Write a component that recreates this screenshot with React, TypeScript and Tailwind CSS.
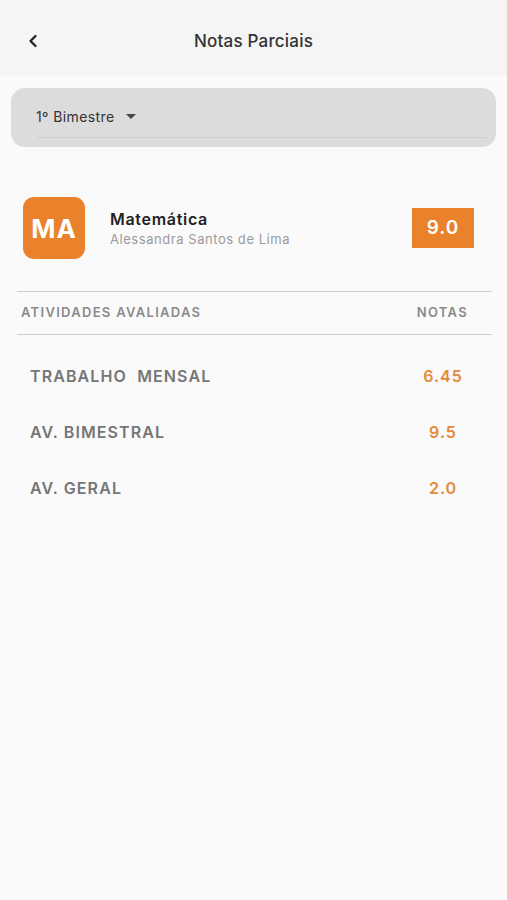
import { ChevronLeft } from "lucide-react";

interface ActivityRowProps {
  name: string;
  grade: string;
}

function ActivityRow({ name, grade }: ActivityRowProps) {
  return (
    <div className="flex h-[56px] items-center justify-between pl-[30px] pr-[44px]">
      <span className="whitespace-pre text-[16px] font-semibold tracking-[1.1px] text-[#767676]">{name}</span>
      <span className="w-[40px] text-center text-[16px] font-semibold tracking-[1px] text-[#e38a3c]">{grade}</span>
    </div>
  );
}

export default function App() {
  return (
    <div className="min-h-[900px] bg-[#fafafa] font-['Inter','Liberation_Sans',sans-serif]">
      {/* cabeçalho */}
      <div className="relative flex h-[76px] items-center justify-center bg-[#f5f5f5] pt-[7px]">
        <ChevronLeft size={20} strokeWidth={2.8} className="absolute left-[23px] top-[31px] text-[#222]" />
        <span className="text-[17px] font-medium tracking-[0.2px] text-[#333]">Notas Parciais</span>
      </div>

      <div className="px-[11px] pt-[12px]">
        <div className="flex h-[59px] flex-col justify-center rounded-[14px] bg-[#dcdcdc] px-[25px] pt-[8px]">
          <div className="flex items-center gap-[12px]">
            <span className="text-[14px] tracking-[0.4px] text-[#333]">1º Bimestre</span>
            <span className="mt-[1px] h-0 w-0 border-x-[5px] border-t-[5px] border-x-transparent border-t-[#444]" />
          </div>
          <div className="mt-[10px] ml-[1px] mr-[-15px] h-px bg-[#cfcfcf]" />
        </div>
      </div>

      {/* disciplina */}
      <div className="flex items-center px-[23px] pt-[50px]">
        <div className="flex h-[62px] w-[62px] items-center justify-center rounded-[11px] bg-[#e9822a]">
          <span className="text-[26px] font-bold tracking-[1px] text-white">MA</span>
        </div>
        <div className="ml-[25px] flex flex-1 flex-col">
          <span className="text-[16px] font-semibold leading-[22px] tracking-[0.7px] text-[#222]">Matemática</span>
          <span className="text-[13px] leading-[18px] tracking-[0.55px] text-[#9a9a9a]">Alessandra Santos de Lima</span>
        </div>
        <div className="mr-[10px] flex h-[40px] w-[62px] items-center justify-center bg-[#e9822a]">
          <span className="text-[19px] font-semibold tracking-[1px] text-white">9.0</span>
        </div>
      </div>

      <div className="ml-[17px] mr-[15px] mt-[32px] h-px bg-[#cdcdcd]" />
      <div className="flex h-[42px] items-center justify-between pl-[21px] pr-[39px]">
        <span className="text-[13px] font-semibold tracking-[1.3px] text-[#8a8a8a]">ATIVIDADES AVALIADAS</span>
        <span className="text-[13px] font-semibold tracking-[1.3px] text-[#8a8a8a]">NOTAS</span>
      </div>
      <div className="ml-[17px] mr-[15px] h-px bg-[#cdcdcd]" />

      <div className="pt-[13px]">
        <ActivityRow name="TRABALHO  MENSAL" grade="6.45" />
        <ActivityRow name="AV. BIMESTRAL" grade="9.5" />
        <ActivityRow name="AV. GERAL" grade="2.0" />
      </div>
    </div>
  );
}
